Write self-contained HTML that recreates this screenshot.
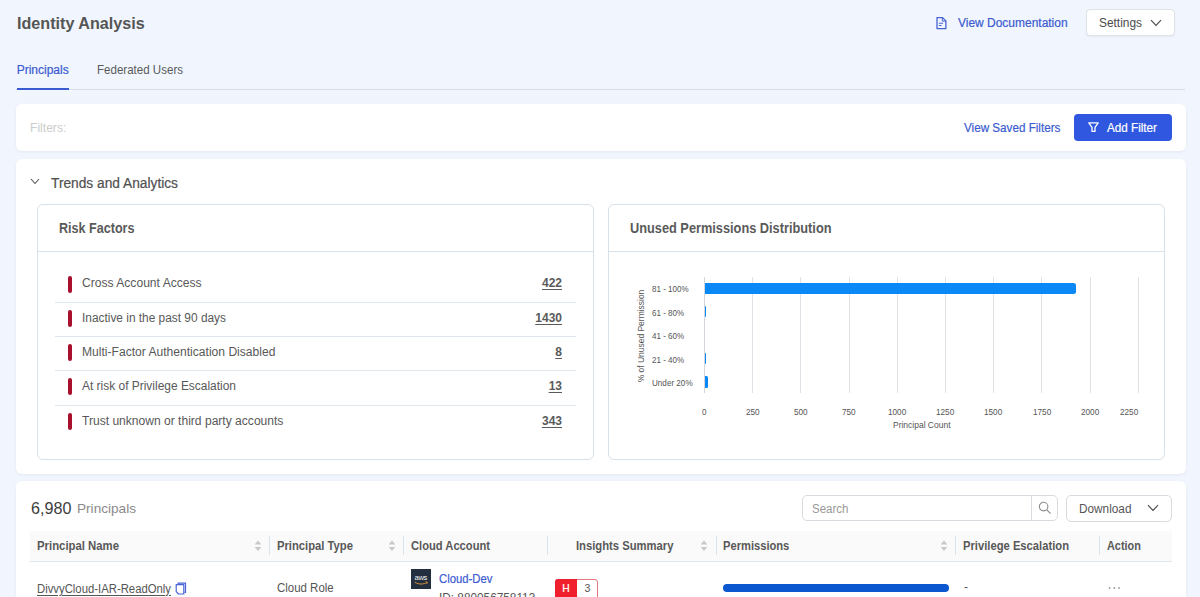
<!DOCTYPE html>
<html><head><meta charset="utf-8">
<style>
*{margin:0;padding:0;box-sizing:border-box}
html,body{width:1200px;height:597px;overflow:hidden}
body{background:#f1f6fe;font-family:"Liberation Sans",sans-serif;position:relative;color:#555}
.a{position:absolute}
.t{position:absolute;line-height:1;white-space:nowrap;transform-origin:0 0}
.card{position:absolute;background:#fff;border-radius:6px;box-shadow:0 1px 3px rgba(0,0,0,0.06)}
.sep{position:absolute;height:1px;background:#dfe6ee}
.rb{position:absolute;left:68.4px;width:3.6px;height:17px;border-radius:2px;background:#a8102e}
.gl{position:absolute;top:277px;width:1px;height:116px;background:#dfe2e7}
.dv{position:absolute;top:536px;width:1px;height:19px;background:#dbe3ec}
</style></head><body>

<!-- header -->
<svg class="a" style="left:935px;top:16px" width="13" height="14" viewBox="0 0 13 14"><path d="M2 1.6h5.6l3.3 3.3v7.7h-8.9z" fill="none" stroke="#4762d3" stroke-width="1.3" stroke-linejoin="round"/><path d="M7.3 1.8v3.3h3.3" fill="none" stroke="#4762d3" stroke-width="1"/><path d="M3.9 7.2h4.2M3.9 9.5h2.6" stroke="#4762d3" stroke-width="1.1"/></svg>
<div class="a" style="left:1085.8px;top:9.2px;width:89px;height:27.2px;background:#fff;border:1px solid #dfe3e8;border-radius:4px;box-shadow:0 1px 2px rgba(0,0,0,0.05)"></div>
<svg class="a" style="left:1150px;top:19px" width="12" height="8" viewBox="0 0 12 8"><path d="M1 1.2l5 5.3 5-5.3" fill="none" stroke="#505050" stroke-width="1.2"/></svg>

<!-- tabs -->
<div class="a" style="left:16px;top:89px;width:1169px;height:1px;background:#d2dde9"></div>
<div class="a" style="left:16.5px;top:88px;width:52.5px;height:2px;background:#3b5bd1"></div>

<!-- filter bar -->
<div class="card" style="left:16px;top:103.6px;width:1169.5px;height:47.7px"></div>
<div class="a" style="left:1074px;top:114px;width:98px;height:27px;background:#2f57df;border-radius:4px"></div>
<svg class="a" style="left:1087px;top:121px" width="13" height="12" viewBox="0 0 13 12"><path d="M1.8 1.8h9.4l-3.2 4.6v4h-3v-4z" fill="none" stroke="#fff" stroke-width="1.3" stroke-linejoin="round"/></svg>

<!-- trends -->
<div class="card" style="left:16px;top:158.5px;width:1169.5px;height:315.8px"></div>
<svg class="a" style="left:30px;top:178px" width="10" height="7" viewBox="0 0 10 7"><path d="M1 1l4 4.5L9 1" fill="none" stroke="#555" stroke-width="1.1"/></svg>

<!-- risk factors -->
<div class="a" style="left:37px;top:203.8px;width:556.5px;height:256.5px;border:1px solid #d8e0e8;border-radius:6px"></div>
<div class="sep" style="left:38px;top:251.3px;width:554.5px;background:#d8e0e8"></div>
<div class="sep" style="left:54.8px;top:302.2px;width:521px"></div>
<div class="sep" style="left:54.8px;top:335.9px;width:521px"></div>
<div class="sep" style="left:54.8px;top:370.4px;width:521px"></div>
<div class="sep" style="left:54.8px;top:405px;width:521px"></div>
<div class="rb" style="top:275.5px"></div>
<div class="rb" style="top:309.8px"></div>
<div class="rb" style="top:344.1px"></div>
<div class="rb" style="top:378.4px"></div>
<div class="rb" style="top:412.7px"></div>

<!-- chart -->
<div class="a" style="left:608px;top:203.8px;width:556.8px;height:256.5px;border:1px solid #d8e0e8;border-radius:6px"></div>
<div class="sep" style="left:609px;top:251.3px;width:554.8px;background:#d8e0e8"></div>
<div class="gl" style="left:704px;background:#d3d7dd"></div>
<div class="gl" style="left:752.2px"></div>
<div class="gl" style="left:800.4px"></div>
<div class="gl" style="left:848.6px"></div>
<div class="gl" style="left:896.8px"></div>
<div class="gl" style="left:945px"></div>
<div class="gl" style="left:993.2px"></div>
<div class="gl" style="left:1041.4px"></div>
<div class="gl" style="left:1089.6px"></div>
<div class="gl" style="left:1137.8px"></div>
<div class="a" style="left:704.5px;top:282.5px;width:371.3px;height:11.7px;background:#0a88f5;border-radius:0 2.5px 2.5px 0"></div>
<div class="a" style="left:704.5px;top:306px;width:1.6px;height:11px;background:#0a88f5;border-radius:0 1px 1px 0"></div>
<div class="a" style="left:704.5px;top:352.8px;width:1.6px;height:11px;background:#0a88f5;border-radius:0 1px 1px 0"></div>
<div class="a" style="left:704.5px;top:376px;width:3.6px;height:11.5px;background:#0a88f5;border-radius:0 1.5px 1.5px 0"></div>
<div class="t" style="left:641px;top:336.2px;font-size:9px;color:#555;transform:translate(-50%,-50%) rotate(-90deg) scaleX(0.94);transform-origin:50% 50%">% of Unused Permission</div>

<!-- table section -->
<div class="card" style="left:16px;top:481px;width:1169.7px;height:140px"></div>
<div class="a" style="left:802.4px;top:495.2px;width:256px;height:26.3px;border:1px solid #d8dbe0;border-radius:5px"></div>
<div class="a" style="left:1031px;top:496px;width:1px;height:24.5px;background:#d8dbe0"></div>
<svg class="a" style="left:1038px;top:501px" width="14" height="14" viewBox="0 0 14 14"><circle cx="5.6" cy="5.6" r="4.3" fill="none" stroke="#8d8d8d" stroke-width="1.1"/><path d="M8.8 8.8l3.8 3.8" stroke="#8d8d8d" stroke-width="1.2"/></svg>
<div class="a" style="left:1066px;top:495.2px;width:106px;height:26.5px;border:1px solid #d8dbe0;border-radius:5px"></div>
<svg class="a" style="left:1146.5px;top:504px" width="12" height="8" viewBox="0 0 12 8"><path d="M1 1.2l5 5.3 5-5.3" fill="none" stroke="#505050" stroke-width="1.2"/></svg>

<div class="a" style="left:30px;top:530.5px;width:1142px;height:31px;background:#fafafa;border-bottom:1.5px solid #dfe7f0;border-radius:2px 2px 0 0"></div>
<div class="dv" style="left:269px"></div>
<div class="dv" style="left:403px"></div>
<div class="dv" style="left:547px"></div>
<div class="dv" style="left:715.5px"></div>
<div class="dv" style="left:955px"></div>
<div class="dv" style="left:1099px"></div>
<svg class="a" style="left:253.5px;top:539.5px" width="8" height="12" viewBox="0 0 8 12"><path d="M4 0.6L7.4 4.6H0.6z M4 11.1L7.4 7.1H0.6z" fill="#c8c8c8"/></svg>
<svg class="a" style="left:388.3px;top:539.5px" width="8" height="12" viewBox="0 0 8 12"><path d="M4 0.6L7.4 4.6H0.6z M4 11.1L7.4 7.1H0.6z" fill="#c8c8c8"/></svg>
<svg class="a" style="left:700.3px;top:539.5px" width="8" height="12" viewBox="0 0 8 12"><path d="M4 0.6L7.4 4.6H0.6z M4 11.1L7.4 7.1H0.6z" fill="#c8c8c8"/></svg>
<svg class="a" style="left:940px;top:539.5px" width="8" height="12" viewBox="0 0 8 12"><path d="M4 0.6L7.4 4.6H0.6z M4 11.1L7.4 7.1H0.6z" fill="#c8c8c8"/></svg>

<!-- row -->
<svg class="a" style="left:175px;top:581.5px" width="12" height="13" viewBox="0 0 12 13"><path d="M3.2 2.2V1.2h7.3v9.2H9.5" fill="none" stroke="#4a63d6" stroke-width="1.2"/><path d="M1.2 2.7h7.6v9.3H3.6L1.2 9.6z" fill="none" stroke="#4a63d6" stroke-width="1.2" stroke-linejoin="round"/></svg>
<div class="a" style="left:410.8px;top:569.2px;width:20.4px;height:20.3px;background:#232f3e"></div>
<div class="a" style="left:414.6px;top:574.2px;font-size:7.6px;line-height:1;color:#f2f2f2;font-family:'Liberation Sans',sans-serif;letter-spacing:-0.35px">aws</div>
<svg class="a" style="left:414px;top:580.5px" width="15" height="5" viewBox="0 0 15 5"><path d="M0.8 1.2c3.8 2.4 8.6 2.4 12.4 0.2" fill="none" stroke="#d4923a" stroke-width="1"/><path d="M11.6 0.6l1.8 0.6-0.6 1.7" fill="none" stroke="#d4923a" stroke-width="0.8"/></svg>
<div class="a" style="left:555px;top:579.2px;width:43px;height:25px;border:1px solid #e27a80;border-radius:3px;background:#fff"></div>
<div class="a" style="left:555px;top:579.2px;width:21.7px;height:25px;background:#ef1f2d;border-radius:3px 0 0 3px"></div>
<div class="a" style="left:723px;top:583.8px;width:226.3px;height:8.7px;background:#0b57d0;border-radius:5px"></div>
<svg class="a" style="left:1108px;top:586px" width="13" height="4" viewBox="0 0 13 4"><circle cx="1.6" cy="2" r="0.9" fill="#999"/><circle cx="6.3" cy="2" r="0.9" fill="#999"/><circle cx="11" cy="2" r="0.9" fill="#999"/></svg>

<div class="t" id="title" style="left:16.50px;top:14.83px;font-size:16.5px;color:#555555;font-weight:bold;transform:scaleX(0.9792);">Identity Analysis</div>
<div class="t" id="viewdoc" style="left:957.80px;top:17.34px;font-size:12px;color:#3b5bd1;-webkit-text-stroke:0.2px;transform:scaleX(0.9978);">View Documentation</div>
<div class="t" id="settings" style="left:1099.30px;top:17.34px;font-size:12px;color:#4a4a4a;transform:scaleX(0.9917);">Settings</div>
<div class="t" id="tab1" style="left:16.70px;top:64.04px;font-size:12px;color:#3b5bd1;-webkit-text-stroke:0.2px;">Principals</div>
<div class="t" id="tab2" style="left:96.50px;top:64.04px;font-size:12px;color:#5a5a5a;transform:scaleX(0.9622);">Federated Users</div>
<div class="t" id="filters" style="left:30.00px;top:121.84px;font-size:12px;color:#cccccc;transform:scaleX(1.0083);">Filters:</div>
<div class="t" id="vsf" style="left:963.60px;top:121.84px;font-size:12px;color:#3b5bd1;-webkit-text-stroke:0.2px;transform:scaleX(0.9722);">View Saved Filters</div>
<div class="t" id="addf" style="left:1107.40px;top:121.84px;font-size:12px;color:#ffffff;-webkit-text-stroke:0.2px;transform:scaleX(0.9735);">Add Filter</div>
<div class="t" id="trends" style="left:51.30px;top:175.65px;font-size:14px;color:#505050;-webkit-text-stroke:0.2px;transform:scaleX(0.9811);">Trends and Analytics</div>
<div class="t" id="rf" style="left:58.70px;top:220.95px;font-size:14px;color:#5a5a5a;font-weight:bold;transform:scaleX(0.8983);">Risk Factors</div>
<div class="t" id="upd" style="left:629.50px;top:220.95px;font-size:14px;color:#5a5a5a;font-weight:bold;transform:scaleX(0.9120);">Unused Permissions Distribution</div>
<div class="t" id="r0" style="left:82.00px;top:277.44px;font-size:12px;color:#585858;transform:scaleX(1.0074);">Cross Account Access</div>
<div class="t" id="n0" style="left:541.97px;top:277.44px;font-size:12px;color:#5a5a5a;font-weight:bold;text-decoration:underline;text-underline-offset:1.5px;">422</div>
<div class="t" id="r1" style="left:82.00px;top:311.71px;font-size:12px;color:#585858;transform:scaleX(0.9901);">Inactive in the past 90 days</div>
<div class="t" id="n1" style="left:535.30px;top:311.71px;font-size:12px;color:#5a5a5a;font-weight:bold;text-decoration:underline;text-underline-offset:1.5px;">1430</div>
<div class="t" id="r2" style="left:82.00px;top:345.98px;font-size:12px;color:#585858;transform:scaleX(1.0068);">Multi-Factor Authentication Disabled</div>
<div class="t" id="n2" style="left:555.31px;top:345.98px;font-size:12px;color:#5a5a5a;font-weight:bold;text-decoration:underline;text-underline-offset:1.5px;">8</div>
<div class="t" id="r3" style="left:82.00px;top:380.25px;font-size:12px;color:#585858;transform:scaleX(0.9953);">At risk of Privilege Escalation</div>
<div class="t" id="n3" style="left:548.64px;top:380.25px;font-size:12px;color:#5a5a5a;font-weight:bold;text-decoration:underline;text-underline-offset:1.5px;">13</div>
<div class="t" id="r4" style="left:82.00px;top:414.52px;font-size:12px;color:#585858;transform:scaleX(1.0054);">Trust unknown or third party accounts</div>
<div class="t" id="n4" style="left:541.97px;top:414.52px;font-size:12px;color:#5a5a5a;font-weight:bold;text-decoration:underline;text-underline-offset:1.5px;">343</div>
<div class="t" id="cl0" style="left:651.70px;top:285.32px;font-size:8.6px;color:#555;transform:scaleX(0.9340);">81 - 100%</div>
<div class="t" id="cl1" style="left:651.70px;top:308.72px;font-size:8.6px;color:#555;transform:scaleX(0.9359);">61 - 80%</div>
<div class="t" id="cl2" style="left:651.70px;top:332.12px;font-size:8.6px;color:#555;transform:scaleX(0.9359);">41 - 60%</div>
<div class="t" id="cl3" style="left:651.70px;top:355.52px;font-size:8.6px;color:#555;transform:scaleX(0.9359);">21 - 40%</div>
<div class="t" id="cl4" style="left:651.70px;top:378.92px;font-size:8.6px;color:#555;transform:scaleX(0.9442);">Under 20%</div>
<div class="t" id="tk0" style="left:702.12px;top:407.72px;font-size:8.6px;color:#555;transform:scaleX(0.9542);">0</div>
<div class="t" id="tk1" style="left:745.76px;top:407.72px;font-size:8.6px;color:#555;transform:scaleX(0.9542);">250</div>
<div class="t" id="tk2" style="left:793.96px;top:407.72px;font-size:8.6px;color:#555;transform:scaleX(0.9542);">500</div>
<div class="t" id="tk3" style="left:842.16px;top:407.72px;font-size:8.6px;color:#555;transform:scaleX(0.9542);">750</div>
<div class="t" id="tk4" style="left:888.08px;top:407.72px;font-size:8.6px;color:#555;transform:scaleX(0.9542);">1000</div>
<div class="t" id="tk5" style="left:936.27px;top:407.72px;font-size:8.6px;color:#555;transform:scaleX(0.9542);">1250</div>
<div class="t" id="tk6" style="left:984.48px;top:407.72px;font-size:8.6px;color:#555;transform:scaleX(0.9542);">1500</div>
<div class="t" id="tk7" style="left:1032.67px;top:407.72px;font-size:8.6px;color:#555;transform:scaleX(0.9542);">1750</div>
<div class="t" id="tk8" style="left:1080.88px;top:407.72px;font-size:8.6px;color:#555;transform:scaleX(0.9542);">2000</div>
<div class="t" id="tk9" style="left:1119.58px;top:407.72px;font-size:8.6px;color:#555;transform:scaleX(0.9542);">2250</div>
<div class="t" id="pc" style="left:892.95px;top:421.42px;font-size:8.6px;color:#555;transform:scaleX(0.9866);">Principal Count</div>
<div class="t" id="cnt" style="left:30.60px;top:499.53px;font-size:16.5px;color:#3d3d3d;transform:scaleX(0.9783);">6,980</div>
<div class="t" id="cntl" style="left:76.50px;top:502.07px;font-size:13.5px;color:#8a8a8a;transform:scaleX(1.0080);">Principals</div>
<div class="t" id="search" style="left:812.00px;top:502.84px;font-size:12px;color:#999999;transform:scaleX(0.9571);">Search</div>
<div class="t" id="dl" style="left:1079.30px;top:502.84px;font-size:12px;color:#555555;transform:scaleX(0.9836);">Download</div>
<div class="t" id="h0" style="left:37.00px;top:539.94px;font-size:12px;color:#585858;font-weight:bold;transform:scaleX(0.9458);">Principal Name</div>
<div class="t" id="h1" style="left:277.00px;top:539.94px;font-size:12px;color:#585858;font-weight:bold;transform:scaleX(0.9366);">Principal Type</div>
<div class="t" id="h2" style="left:411.20px;top:539.94px;font-size:12px;color:#585858;font-weight:bold;transform:scaleX(0.9306);">Cloud Account</div>
<div class="t" id="h3" style="left:576.30px;top:539.94px;font-size:12px;color:#585858;font-weight:bold;transform:scaleX(0.9372);">Insights Summary</div>
<div class="t" id="h4" style="left:723.00px;top:539.94px;font-size:12px;color:#585858;font-weight:bold;transform:scaleX(0.9289);">Permissions</div>
<div class="t" id="h5" style="left:962.50px;top:539.94px;font-size:12px;color:#585858;font-weight:bold;transform:scaleX(0.9348);">Privilege Escalation</div>
<div class="t" id="h6" style="left:1107.20px;top:539.94px;font-size:12px;color:#585858;font-weight:bold;transform:scaleX(0.9051);">Action</div>
<div class="t" id="pn" style="left:37.00px;top:582.64px;font-size:12px;color:#555;text-decoration:underline;text-underline-offset:1.5px;transform:scaleX(0.9434);">DivvyCloud-IAR-ReadOnly</div>
<div class="t" id="pt" style="left:277.00px;top:582.04px;font-size:12px;color:#555;transform:scaleX(0.9549);">Cloud Role</div>
<div class="t" id="cd" style="left:438.80px;top:572.64px;font-size:12px;color:#3b5bd1;-webkit-text-stroke:0.2px;transform:scaleX(0.9417);">Cloud-Dev</div>
<div class="t" id="cid" style="left:438.80px;top:592.04px;font-size:12px;color:#555;transform:scaleX(0.9829);">ID: 880056758113</div>
<div class="t" id="bh" style="left:562.28px;top:583.58px;font-size:10.3px;color:#fff;-webkit-text-stroke:0.2px;">H</div>
<div class="t" id="b3" style="left:584.38px;top:583.41px;font-size:10.5px;color:#555;">3</div>
<div class="t" id="pe" style="left:964.00px;top:580.84px;font-size:12px;color:#555;">-</div>
</body></html>
